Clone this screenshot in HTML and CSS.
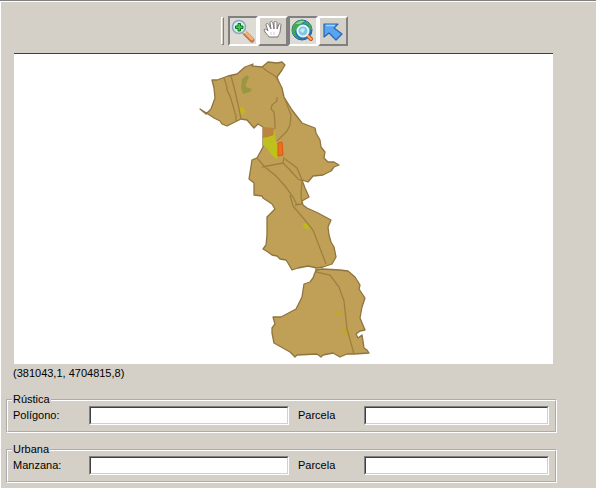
FILE: index.html
```html
<!DOCTYPE html>
<html lang="es">
<head>
<meta charset="utf-8">
<title>Catastro</title>
<link rel="stylesheet" href="styles.css">
</head>
<body>
<main class="panel">
  <div class="toolbar" role="toolbar">
    <span class="grip"></span>
    <button class="tool pressed" type="button" aria-label="Acercar">
      <svg viewBox="0 0 26 26">
        <path d="M15 15l7 7" stroke="#b9764a" stroke-width="5" stroke-linecap="round"/>
        <path d="M16 15l6 6" stroke="#f7b070" stroke-width="3" stroke-linecap="round"/>
        <path d="M13 15l3-2" stroke="#e9e4dc" stroke-width="2"/>
        <circle cx="9" cy="9" r="6.500" fill="#d3f0f6" stroke="#8aa9b6" stroke-width="1.500"/>
        <path d="M8 5.500h2.500V8H13v2.500h-2.500V13H8v-2.500H5.500V8H8z" fill="#47c653" stroke="#08751b"/>
      </svg>
    </button>
    <button class="tool" type="button" aria-label="Mover">
      <svg viewBox="0 0 26 26">
        <path d="M9 19c-1-2-4-4-5-7 1-2 3 0 4 1L6 7c0-2 2-2 3 0l2 4-1-6c0-2 2-2 3 0l1 6V5c0-2 3-2 3 0v6l2-5c1-1 2 0 2 1l-1 7c0 2-2 3-2 5z" fill="#fff" stroke="#777" stroke-width="1"/>
        <path d="M11 14v3M14 14v3" stroke="#ccc"/>
      </svg>
    </button>
    <button class="tool pressed" type="button" aria-label="Ver todo">
      <svg viewBox="0 0 26 26">
        <circle cx="12" cy="12" r="10" fill="#2476bd" stroke="#22619d"/>
        <path d="M3 7c2-3 6-5 9-5l2 2-4 3-1 4-4 2 1 5 4 3c-5-1-8-5-8-9zM15 3c4 1 7 4 7 9l-3-1-1-4-4-1z" fill="#43a957"/>
        <path d="M5 6c3-3 7-4 10-3l-5 3z" fill="#8bd48d"/>
        <path d="M18 18l3 3" stroke="#b45a2d" stroke-width="4" stroke-linecap="round"/>
        <path d="M18 18l3 3" stroke="#ffac63" stroke-width="2" stroke-linecap="round"/>
        <circle cx="13" cy="13" r="5.500" fill="#7cc8e4" stroke="#e5f4f8" stroke-width="2"/>
        <path d="M10 13a3 3 0 0 1 5-2l-2 4z" fill="#c5ebf5"/>
      </svg>
    </button>
    <button class="tool" type="button" aria-label="Seleccionar">
      <svg viewBox="0 0 26 26">
        <path d="M4 6h14l-4 4 8 6-6 6-7-7-5 4z" fill="#5aa3ee" stroke="#2268b5" stroke-width="1.200" stroke-linejoin="round"/>
        <path d="M6 7.500h9" fill="none" stroke="#a2d3fb" stroke-width="1.500"/>
      </svg>
    </button>
  </div>

  <div class="map">
    <svg viewBox="14 54 539 310" role="img" aria-label="Mapa del municipio">
      <g class="land">
        <path d="M200 109l6 5 5-5 4-11-1-10-2-8h5l11-4 9-2 8-7 8-3-1 2 10 1 6-5 9 1 5-1 3 3-3 5-5 7 2 5 3 6 2 9 8 13 10 13 13 5 1 5 4 7 1 7 4 5-1 6 4 4h6l5 3-5 2-3 4-8 4-10 1-5 6-6-2 3 8 4 9-7 4 1 4 4 3 11 5 13 7-3 7 1 8 2 7 3 5 2 10-4 7-9 3-6 1-9-2-10 2-6 2-4-7-2-3-6-1-3-3-5-1-4-3-5-3 3-4 1-10v-18l8-8-3-5-9-6-1-2-8-1v-12l-5-4 3-19 5-2 6-11v-10l0-10-5-3-4 4-7-8-6-1-6 3-8 4-5-2-2-3-6-3-6-4z"/>
        <path d="M316 270l6-1 18 1 8 1 7 6 5 8-1 4 6 9-3 9-2 11 5 12-5 1-4 3 2 4 4-3 1 6 1 7 3 2 2 3-15 1-7 0-7 3-7-4-10 2-2 2-4-3-20 1-2 2-5-5-16-9-2-10 0-5 3-4-2-7h8l15-8 6-12 2-13 6-2 3-4z"/>
      </g>
      <path d="M263 127l11 1-1 8-4 3-6-2z" fill="#bd8440"/>
      <path d="M242 79l5-4 2 2-3 7v3l6 2-2 3-7 2-2-6z" fill="#989840"/>
      <path d="M263 138l5-1 6-2v-6l1 6 1 7 2 4v9l-1 4-3-2-4-4-2-4-5-4z" fill="#bec01e"/>
      <path d="M278 143l4-1 1 13-5 1z" fill="#ee7018" stroke="#d75b18"/>
      <path d="M240 109l2-3 2 3 2 4-4 1-3 1z" fill="#c4b51e"/>
      <path d="M303 224l4-1 3 3-2 4-4-2z" fill="#bcb91f"/>
      <path d="M336 312l2 2 4-3-3 3-3-1zM342 329l3 2 4 1-3 1z" fill="#c4bd1c" stroke="#bcad14" stroke-width="1.500"/>
      <g class="roads">
        <path d="M224 78l3 9 0 3 3 6 6 20v5M231 76l4 15 4 18 2 10M262 67l5 4 8 5 4 6M277 97l0 4-5 4-1 4 3 3 1 12v5M284 97l7 18-1 10-3 6-10 10M252 160l5-2 8 9 11 9 9 10 8 11 4 8M262 167l21-4 7 7 8 9 4 2-1 14 1 9M283 163l1-6M285 159l12 9 5 12M290 195l3 11 11 13 9 11 13 34M302 204l-7 1M316 268v4l14 3 9 12 5 14 3 28 7 25"/>
      </g>
    </svg>
  </div>

  <output class="coords">(381043,1, 4704815,8)</output>

  <form class="search">
    <fieldset>
      <legend>Rústica</legend>
      <div class="row">
        <label for="poligono">Polígono:</label>
        <span class="field"><input id="poligono" type="text"></span>
        <label for="parcela-rustica">Parcela</label>
        <span class="field"><input id="parcela-rustica" type="text"></span>
      </div>
    </fieldset>
    <fieldset>
      <legend>Urbana</legend>
      <div class="row">
        <label for="manzana">Manzana:</label>
        <span class="field"><input id="manzana" type="text"></span>
        <label for="parcela-urbana">Parcela</label>
        <span class="field"><input id="parcela-urbana" type="text"></span>
      </div>
    </fieldset>
  </form>
</main>
</body>
</html>
```
FILE: styles.css
```css
* {
  box-sizing: border-box;
}

body {
  margin: 0;
  background: #d4d0c8;
  color: #000;
  font: 11px/13px "Liberation Sans", Arial, sans-serif;
}

.panel {
  min-height: 100vh;
  padding: 15px 39px 0 6px;
  border-top: 1px solid #808080;
  box-shadow: inset 1px 1px #fff;
}

.toolbar {
  display: flex;
  justify-content: center;
  align-items: center;
  padding: 0 0 7px 6px;
}

.grip {
  width: 3px;
  height: 28px;
  margin-right: 4px;
  border: 1px solid;
  border-color: #fff #808080 #808080 #fff;
}

.tool {
  width: 30px;
  height: 30px;
  padding: 0;
  border: 2px solid;
  border-color: #fff #808080 #808080 #fff;
  background: #d4d0c8;
}

.tool.pressed {
  border-color: #808080 #fff #fff #808080;
  background: #dedbd5;
}

.tool svg {
  display: block;
  width: 100%;
  height: 26px;
  fill: none;
}

.map {
  margin: 0 4px 0 8px;
  border-top: 1px solid #404040;
  background: #fff;
}

.map svg {
  display: block;
  width: 100%;
}

.land {
  fill: #c0a057;
  stroke: #8f7440;
  stroke-width: 1.3;
  stroke-linejoin: round;
}

.roads {
  fill: none;
  stroke: #9c8040;
  stroke-width: 1.3;
}

.coords {
  display: block;
  padding: 3px 0 0 7px;
}

.search {
  display: grid;
  gap: 10px;
  padding-top: 13px;
}

fieldset {
  min-width: 0;
  margin: 0;
  padding: 0 6px 6px 5px;
  border: 2px groove #fff;
}

legend {
  margin-left: -1px;
  padding: 0 1px;
}

.row {
  display: grid;
  grid-template-columns: 76px 200fr 75px 185fr;
  align-items: center;
}

.row label:nth-of-type(2) {
  padding-left: 9px;
}

.field {
  display: flex;
  border: 1px solid;
  border-color: #808080 #fff #fff #808080;
}

input {
  width: 100%;
  height: 17px;
  padding: 0 2px;
  border: 1px solid;
  border-color: #404040 #d4d0c8 #d4d0c8 #404040;
  background: #fff;
  font: inherit;
}
```
